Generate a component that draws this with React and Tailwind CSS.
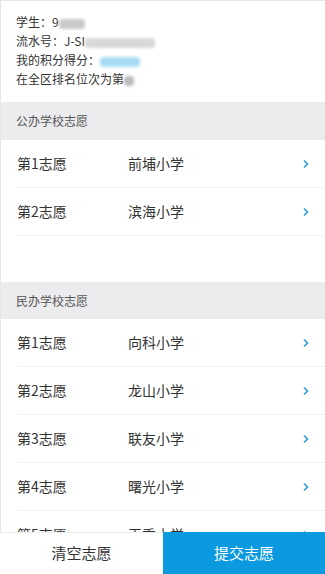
import React from "react";

const gongban = ["前埔小学", "滨海小学"];
const minban = ["向科小学", "龙山小学", "联友小学", "曙光小学", "玉秀小学"];

function Chevron() {
  return (
    <svg width="8" height="12" viewBox="0 0 8 12" className="shrink-0">
      <path d="M2 2.5 L5.5 6 L2 9.5" fill="none" stroke="#2d9cd6" strokeWidth="1.6" />
    </svg>
  );
}

function Row({ idx, name }) {
  return (
    <div className="ml-4 h-[48px] flex items-center border-b border-[#f1f1f1] pr-[15px]">
      <span className="w-[111px] text-[14px] text-[#333]">第{idx}志愿</span>
      <span className="flex-1 text-[14px] text-[#333]">{name}</span>
      <Chevron />
    </div>
  );
}

function Blur({ w, color = "#c9c9c9" }) {
  return (
    <span
      className="inline-block align-middle h-[10px] rounded-sm blur-[1.5px]"
      style={{ width: w, background: color }}
    />
  );
}

export default function App() {
  return (
    <div
      className="min-h-screen bg-white border-l border-t border-[#e6e6e6] pb-[42px]"
      style={{ fontFamily: '"Noto Sans CJK SC", "Noto Sans", sans-serif' }}
    >
      {/* 个人信息 */}
      <div className="px-[15px] pt-[11px] pb-[14px] text-[12px] leading-[19px] text-[#333]">
        <div>学生：9<Blur w={26} /></div>
        <div>流水号：J-SI<Blur w={70} color="#d8d8d8" /></div>
        <div>我的积分得分：<Blur w={40} color="#a8dcf4" /></div>
        <div>在全区排名位次为第<Blur w={10} color="#bbbbbb" /></div>
      </div>

      {/* 公办 */}
      <div className="h-[38px] bg-[#ececee] px-[15px] flex items-center text-[12px] text-[#555]">
        公办学校志愿
      </div>
      {gongban.map((s, i) => (
        <Row key={s} idx={i + 1} name={s} />
      ))}

      <div className="h-[46px]" />

      {/* 民办 */}
      <div className="h-[37px] bg-[#ececee] px-[15px] flex items-center text-[12px] text-[#555]">
        民办学校志愿
      </div>
      {minban.map((s, i) => (
        <Row key={s} idx={i + 1} name={s} />
      ))}

      {/* 底部按钮 */}
      <div className="fixed bottom-0 left-0 right-0 h-[42px] flex text-[15px]">
        <button className="flex-1 bg-white text-[#333] border-t border-[#eee]">清空志愿</button>
        <button className="w-[162px] bg-[#0b9ae0] text-white">提交志愿</button>
      </div>
    </div>
  );
}
